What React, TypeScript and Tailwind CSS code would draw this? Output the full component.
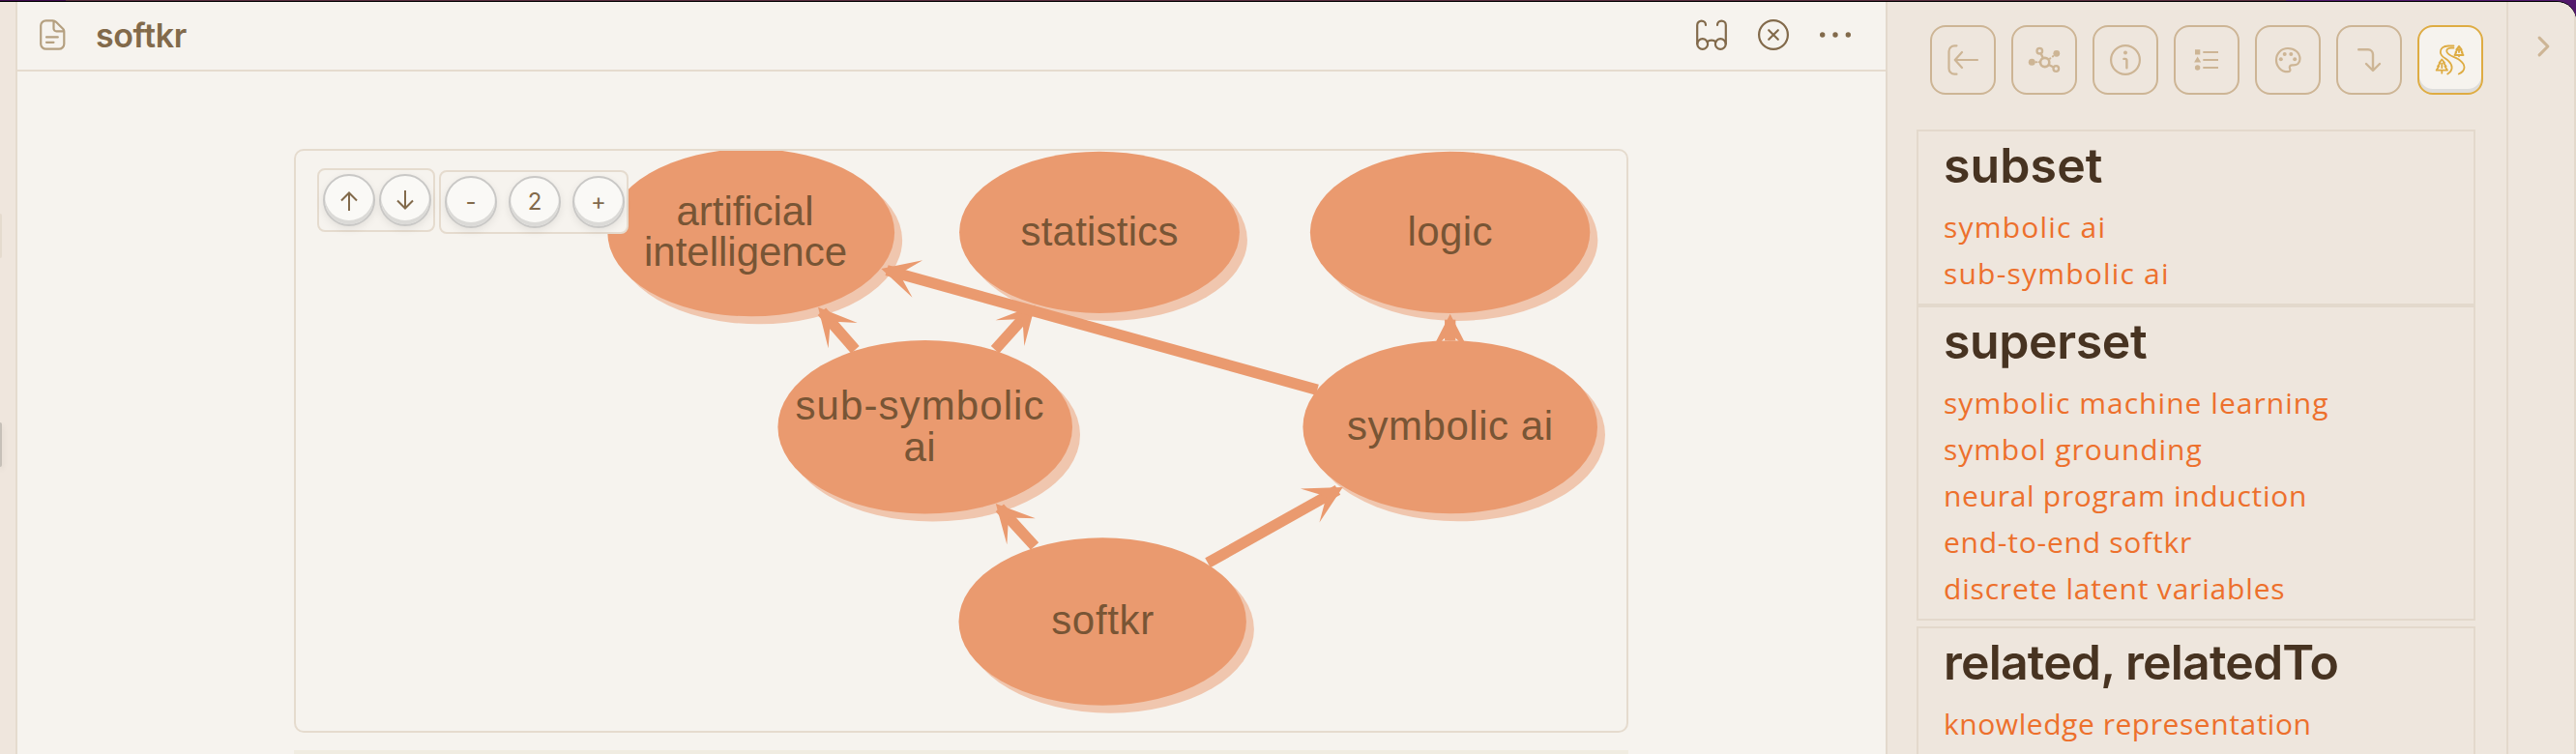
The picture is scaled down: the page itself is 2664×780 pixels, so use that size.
import type { ReactNode } from "react";

type GraphNode = {
  cx: number;
  cy: number;
  rx: number;
  ry: number;
  lines: { text: string; x: number; y: number; length: number }[];
};

const nodes: GraphNode[] = [
  {
    cx: 776.7, cy: 240.6, rx: 148.4, ry: 86.7,
    lines: [
      { text: "artificial", x: 770.5, y: 232.7, length: 142 },
      { text: "intelligence", x: 771, y: 274.7, length: 210 },
    ],
  },
  { cx: 1137, cy: 240.3, rx: 144.9, ry: 83.6, lines: [{ text: "statistics", x: 1137, y: 254.3, length: 163 }] },
  { cx: 1499.6, cy: 240.3, rx: 144.7, ry: 83.6, lines: [{ text: "logic", x: 1499.5, y: 254.3, length: 88 }] },
  {
    cx: 956.7, cy: 441.8, rx: 152.3, ry: 89.8,
    lines: [
      { text: "sub-symbolic", x: 951, y: 434.3, length: 257 },
      { text: "ai", x: 951, y: 476.7, length: 33 },
    ],
  },
  { cx: 1499.7, cy: 441.8, rx: 152.3, ry: 89.5, lines: [{ text: "symbolic ai", x: 1499.5, y: 454.7, length: 213 }] },
  { cx: 1140.2, cy: 643, rx: 148.7, ry: 86.7, lines: [{ text: "softkr", x: 1140.2, y: 656, length: 106 }] },
];

// [startX, startY, tipX, tipY]
const edges: [number, number, number, number][] = [
  [1249, 582.3, 1388.7, 504],
  [1070, 565, 1029.8, 521],
  [884.4, 361.7, 846, 317.7],
  [1029, 361.7, 1070.5, 315.5],
  [1362.3, 403.3, 911.3, 278],
  [1499.7, 352.3, 1499.7, 324.7],
];

function Edge({ points }: { points: [number, number, number, number] }) {
  const [x1, y1, x2, y2] = points;
  const len = Math.hypot(x2 - x1, y2 - y1);
  const dx = (x2 - x1) / len;
  const dy = (y2 - y1) / len;
  const at = (along: number, side: number) => `${x2 + dx * along - dy * side},${y2 + dy * along + dx * side}`;
  return (
    <g>
      <line x1={x1} y1={y1} x2={x2 - dx * 6} y2={y2 - dy * 6} stroke="#ea9a6f" strokeWidth="11.3" />
      <polygon points={`${at(0, 0)} ${at(-39, 20)} ${at(-19.5, 0)} ${at(-39, -20)}`} fill="#ea9a6f" />
    </g>
  );
}

function Graph() {
  return (
    <svg viewBox="306 156 1376 600" className="block h-[600px] w-[1376px]">
      {nodes.map((n) => (
        <ellipse key={`${n.cx}-${n.cy}`} cx={n.cx + 8} cy={n.cy + 8} rx={n.rx} ry={n.ry} fill="#f0c6ae" />
      ))}
      {edges.map((e) => (
        <Edge key={e.join()} points={e} />
      ))}
      {nodes.map((n) => (
        <g key={`${n.cx}-${n.cy}`}>
          <ellipse cx={n.cx} cy={n.cy} rx={n.rx} ry={n.ry} fill="#ea9a6f" />
          {n.lines.map((l) => (
            <text
              key={l.text}
              x={l.x}
              y={l.y}
              textAnchor="middle"
              textLength={l.length}
              className="fill-[#785535] font-['Liberation_Sans',sans-serif] text-[42px]"
            >
              {l.text}
            </text>
          ))}
        </g>
      ))}
    </svg>
  );
}

function Icon({ children, width = 2.2 }: { children: ReactNode; width?: number }) {
  return (
    <svg
      viewBox="0 0 32 32"
      className="size-8 shrink-0 overflow-visible"
      fill="none"
      stroke="currentColor"
      strokeWidth={width}
      strokeLinecap="round"
      strokeLinejoin="round"
    >
      {children}
    </svg>
  );
}

const tools: { name: string; icon: ReactNode; active?: boolean }[] = [
  {
    name: "Backlinks",
    icon: (
      <Icon>
        <path d="M9.5 1.3H7.3A5.8 5.8 0 0 0 1.5 7.1V24.9A5.8 5.8 0 0 0 7.3 30.7H9.5M31 16H8M15 8L7.8 16L15 24" />
      </Icon>
    ),
  },
  {
    name: "Graph",
    icon: (
      <Icon>
        <circle cx="11.3" cy="6.7" r="2.8" strokeWidth="2.3" />
        <circle cx="28.3" cy="25" r="2.8" strokeWidth="2.3" />
        <circle cx="16.7" cy="18.5" r="4.6" strokeWidth="2.6" />
        <circle cx="28.8" cy="9.3" r="3.4" fill="currentColor" stroke="none" />
        <circle cx="3.3" cy="18.3" r="3.5" fill="currentColor" stroke="none" />
        <path d="M12.7 9.6L14.6 13.6M20.8 21L25.6 23.5" strokeWidth="2.4" />
        <path d="M7.4 18.3h.8M10.5 18.3h.6M22 14.6l.4-.3M24.8 12.5l.5-.4" strokeWidth="2" />
      </Icon>
    ),
  },
  {
    name: "Info",
    icon: (
      <Icon>
        <circle cx="16" cy="16" r="14.9" />
        <path d="M14.4 14.9h1.5a1.5 1.5 0 0 1 1.5 1.5V24.3" strokeWidth="2.4" />
        <circle cx="16" cy="8.6" r="2" fill="currentColor" stroke="none" />
      </Icon>
    ),
  },
  {
    name: "Outline",
    icon: (
      <Icon>
        <path d="M4 5.2h5.3v5.4H4zM6.6 12.6l3.6 6H3.1z" fill="currentColor" stroke="none" />
        <circle cx="6.6" cy="24" r="2.7" fill="currentColor" stroke="none" />
        <path d="M12.3 8H28M12.3 16H28M12.3 24H28" strokeLinecap="butt" />
      </Icon>
    ),
  },
  {
    name: "Palette",
    icon: (
      <Icon>
        <path d="M16 4C9.2 4 4 9.2 4 16s5.2 12.2 11.8 12.2c2.4 0 3.2-1.4 2.3-3.2c-1-2.3.4-3.9 2.9-3.7c4.5.3 7.5-1.7 7.5-6.2C28.5 8.4 22.8 4 16 4z" />
        <g fill="currentColor" stroke="none">
          <circle cx="8.8" cy="15.3" r="2" />
          <circle cx="12.7" cy="10" r="2" />
          <circle cx="19.3" cy="10" r="2" />
          <circle cx="23.2" cy="15.3" r="2" />
        </g>
      </Icon>
    ),
  },
  {
    name: "Outgoing",
    icon: (
      <Icon width={2.4}>
        <path d="M5.2 5.3H15A5 5 0 0 1 20 10.3V26.5M13 20L20 27L27 20" />
      </Icon>
    ),
  },
  {
    name: "Trail",
    active: true,
    icon: (
      <Icon width={1.8}>
        <path d="M19.5 1.5H14C8.5 1.5 5.6 4.2 5.8 8c.2 4.8 5.2 6 8.6 9.3c4.4 4.2 4.6 9.6-1.2 13.2" />
        <path d="M19.5 3.6H17c-4 .2-5.3 2-4.4 4.4c1.6 4 8.4 4.6 13.2 8.2c6.4 4.8 6.4 11-1 14.3" />
        <path d="M25 1.8L22.3 5.4h1L21.4 8.2h.8L20.5 11h9L27.8 8.2h.8L26.7 5.4h1zM25 11v1.3M25 5v3" />
        <path d="M7.3 15.5L4.5 19h1.2L3 22.5h1.2L1.6 26.7H13L10.4 22.5h1.2L8.9 19h1.2zM7.3 26.7v3M7.3 20v4" />
      </Icon>
    ),
  },
];

type Relation = { title: string; tracking: string; className: string; links: { text: string; tracking: string }[] };

const relations: Relation[] = [
  {
    title: "subset",
    tracking: "tracking-[0.1px]",
    className: "h-[182px]",
    links: [
      { text: "symbolic ai", tracking: "tracking-[1.2px]" },
      { text: "sub-symbolic ai", tracking: "tracking-[1.2px]" },
    ],
  },
  {
    title: "superset",
    tracking: "tracking-[-0.4px]",
    className: "h-[326px]",
    links: [
      { text: "symbolic machine learning", tracking: "tracking-[1.04px]" },
      { text: "symbol grounding", tracking: "tracking-[0.92px]" },
      { text: "neural program induction", tracking: "tracking-[0.7px]" },
      { text: "end-to-end softkr", tracking: "tracking-[0.75px]" },
      { text: "discrete latent variables", tracking: "tracking-[0.82px]" },
    ],
  },
  {
    title: "related, relatedTo",
    tracking: "tracking-[-0.83px]",
    className: "mt-1.5 h-[200px]",
    links: [{ text: "knowledge representation", tracking: "tracking-[0.55px]" }],
  },
];

function RoundButton({ children }: { children: ReactNode }) {
  return (
    <button className="flex size-[54px] shrink-0 items-center justify-center rounded-full border-2 border-[#c9c8c6] bg-[#faf9f6] font-['Inter',sans-serif] text-2xl text-[#826a4b] shadow-[inset_0_-4px_0_#dbdad7,0_3px_8px_rgba(0,0,0,0.08)]">
      {children}
    </button>
  );
}

function ArrowGlyph({ down = false }: { down?: boolean }) {
  return (
    <svg
      viewBox="0 0 20 22"
      className={down ? "h-[22px] w-5 rotate-180" : "mt-0.5 h-[22px] w-5"}
      fill="none"
      stroke="currentColor"
      strokeWidth="2"
    >
      <path d="M10 21V2.5M2 10.5L10 2.5L18 10.5" />
    </svg>
  );
}

function GraphControls() {
  return (
    <div className="absolute left-[22px] top-[18px] flex items-start gap-1">
      <div className="flex h-[66px] w-[122px] gap-1 rounded-lg border-2 border-[#e5dbce] bg-[#f6f3ee] pl-1 pt-1">
        <RoundButton>
          <ArrowGlyph />
        </RoundButton>
        <RoundButton>
          <ArrowGlyph down />
        </RoundButton>
      </div>
      <div className="mt-0.5 flex h-[66px] w-[196px] gap-3 rounded-lg border-2 border-[#e5dbce] bg-[#f6f3ee] pl-1 pt-1">
        <RoundButton>-</RoundButton>
        <RoundButton>2</RoundButton>
        <RoundButton>+</RoundButton>
      </div>
    </div>
  );
}

function Header() {
  return (
    <header className="flex h-[72px] shrink-0 items-center border-b-2 border-[#e5dbce] pb-0.5 pl-[22px] pr-9">
      <span className="flex text-[#b5a080]">
        <Icon>
          <path d="M14.6 1.3H7.5A5.3 5.3 0 0 0 2.2 6.6V25.4A5.3 5.3 0 0 0 7.5 30.7H21A5.3 5.3 0 0 0 26.3 25.4V12.5C26.3 11.5 26 10.8 25.3 10L18 2.7C17 1.7 16 1.3 14.6 1.3zM15.5 1.8V9.5A2.8 2.8 0 0 0 18.3 12.3H26M8 18.4H19.8M8 23.8H15.5" />
        </Icon>
      </span>
      <h1 className="ml-[27px] flex-1 pt-0.5 font-['Inter',sans-serif] text-[34px] font-semibold leading-none tracking-[-0.4px] text-[#826a4b]">
        softkr
      </h1>
      <div className="flex gap-8 text-[#826a4b]">
        <Icon>
          <path d="M10 6A4.4 4.4 0 0 0 1.2 6V25.5M22 6A4.4 4.4 0 0 1 30.8 6V25.5M11.8 23.5C13.5 21 18.5 21 20.2 23.5" />
          <circle cx="6.7" cy="25.5" r="5.4" />
          <circle cx="25.3" cy="25.5" r="5.4" />
        </Icon>
        <Icon>
          <circle cx="16" cy="16" r="14.9" />
          <path d="M11.2 11.2L20.8 20.8M20.8 11.2L11.2 20.8" />
        </Icon>
        <Icon>
          <g fill="currentColor" stroke="none">
            <circle cx="2.7" cy="16" r="2.7" />
            <circle cx="16" cy="16" r="2.7" />
            <circle cx="29.3" cy="16" r="2.7" />
          </g>
        </Icon>
      </div>
    </header>
  );
}

function Sidebar() {
  return (
    <aside className="flex w-[644px] shrink-0 flex-col overflow-hidden border-x-2 border-[#e3d9cc] bg-[#eee6dd]">
      <div className="flex gap-4 pl-11 pt-6">
        {tools.map((tool) => (
          <button
            key={tool.name}
            aria-label={tool.name}
            className={
              tool.active
                ? "flex h-[72px] w-[68px] shrink-0 items-center justify-center rounded-2xl border-2 border-[#deac43] bg-[#f6f3ee] text-[#deac43] shadow-[inset_0_-4px_0_#dedddb]"
                : "flex h-[72px] w-[68px] shrink-0 items-center justify-center rounded-2xl border-2 border-[#cdb595] text-[#cdb595]"
            }
          >
            {tool.icon}
          </button>
        ))}
      </div>
      <div className="ml-[30px] mt-9 w-[578px]">
        {relations.map((r) => (
          <section key={r.title} className={`border-2 border-[#e3d9cc] pl-[26px] ${r.className}`}>
            <h2
              className={`pt-[5px] font-['Inter',sans-serif] text-[50px] font-semibold leading-[60px] text-[#473321] ${r.tracking}`}
            >
              {r.title}
            </h2>
            <ul className="pt-[10px] font-['Open_Sans',sans-serif] text-[30px] leading-[48px] text-[#ed702c]">
              {r.links.map((link) => (
                <li key={link.text} className={`whitespace-nowrap ${link.tracking}`}>
                  {link.text}
                </li>
              ))}
            </ul>
          </section>
        ))}
      </div>
    </aside>
  );
}

export default function App() {
  return (
    <div className="flex h-[780px] w-[2664px] flex-col overflow-hidden bg-[#52196c]">
      <div className="flex h-px shrink-0">
        <div className="w-[68px] bg-[#3f0b4d]" />
        <div className="flex-1 bg-[#5b2f40]" />
        <div className="w-[300px] bg-[#52196c]" />
      </div>
      <div className="min-h-0 flex-1 rounded-tr-[20px] bg-black pt-px">
        <div className="flex h-full overflow-hidden rounded-tr-[20px] bg-[#f6f3ee]">
          <div className="flex w-[18px] shrink-0 flex-col border-r-2 border-[#e5dbce] bg-[#efe6dd]">
            <div className="mt-[219px] h-[46px] w-0.5 rounded-r-sm bg-[#e5dbce]" />
            <div className="mt-[170px] h-[46px] w-0.5 rounded-r-sm bg-[#c6c0b8] shadow-[0_3px_6px_rgba(0,0,0,0.12)]" />
          </div>
          <main className="flex w-[1932px] shrink-0 flex-col overflow-hidden">
            <Header />
            <div className="pl-[286px] pt-20">
              <div className="relative h-[604px] w-[1380px] overflow-hidden rounded-[10px] border-2 border-[#e5dbce]">
                <Graph />
                <GraphControls />
              </div>
              <div className="mt-[18px] h-10 w-[1380px] bg-[#f0ece1]" />
            </div>
          </main>
          <Sidebar />
          <div className="flex flex-1 justify-center border-r-2 border-[#e3d9cc] bg-[#eee6dd] pt-9 text-[#cdb595]">
            <svg
              viewBox="0 0 10 18"
              className="ml-1 h-5 w-[11px] overflow-visible"
              fill="none"
              stroke="currentColor"
              strokeWidth="2.8"
              strokeLinecap="round"
              strokeLinejoin="round"
            >
              <path d="M1 1L9 9L1 17" />
            </svg>
          </div>
        </div>
      </div>
    </div>
  );
}
